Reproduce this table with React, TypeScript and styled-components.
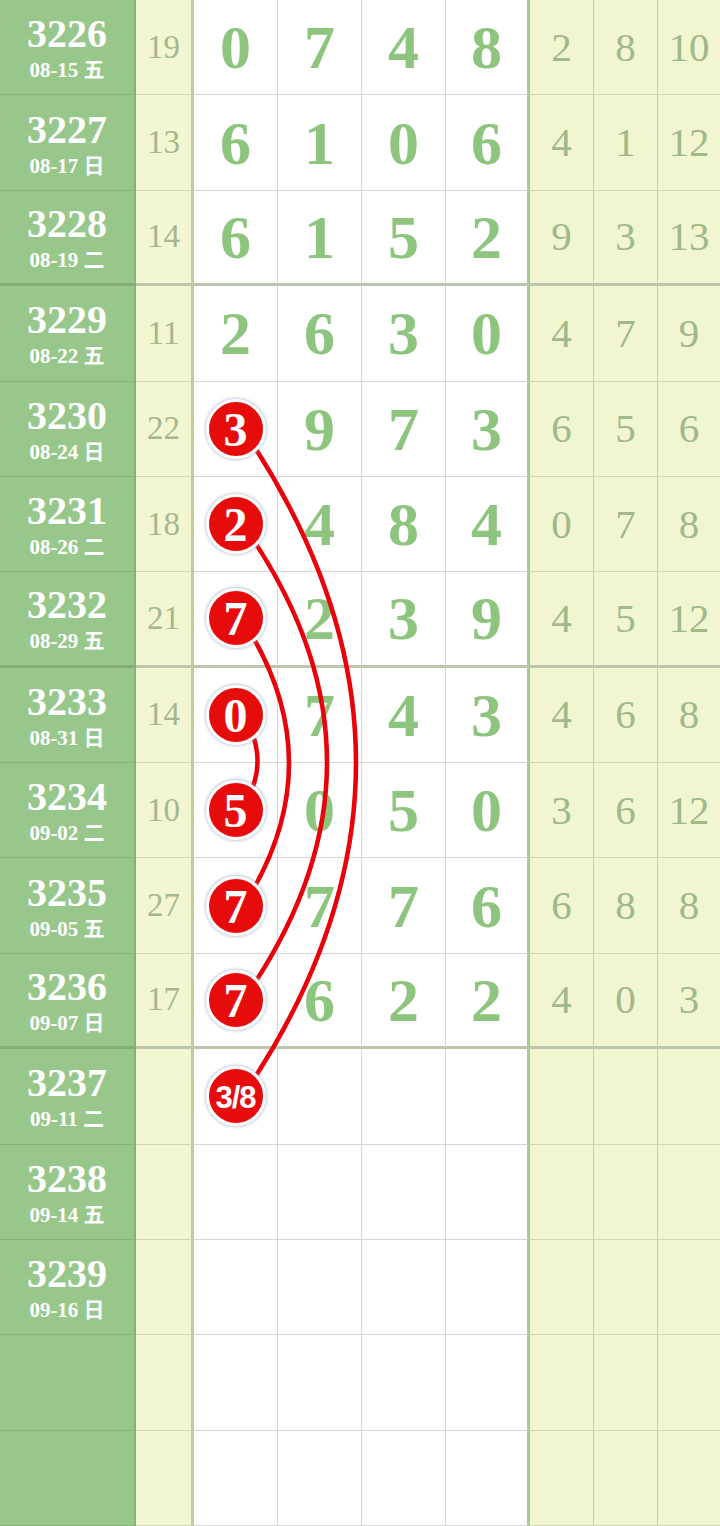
import React from 'react';
import styled, { createGlobalStyle, css } from 'styled-components';

const GlobalStyle = createGlobalStyle`
  html, body {
    margin: 0;
    padding: 0;
    background: #ffffff;
  }
`;

type Kind = 'label' | 'miss' | 'main' | 'mainEnd' | 'side' | 'sideEnd';

interface Draw {
  issue: string;
  date: string;
  miss?: string;
  main?: string[];
  side?: string[];
  ball?: string;
}

const rows: Draw[] = [
  { issue: '3226', date: '08-15 五', miss: '19', main: ['0', '7', '4', '8'], side: ['2', '8', '10'] },
  { issue: '3227', date: '08-17 日', miss: '13', main: ['6', '1', '0', '6'], side: ['4', '1', '12'] },
  { issue: '3228', date: '08-19 二', miss: '14', main: ['6', '1', '5', '2'], side: ['9', '3', '13'] },
  { issue: '3229', date: '08-22 五', miss: '11', main: ['2', '6', '3', '0'], side: ['4', '7', '9'] },
  { issue: '3230', date: '08-24 日', miss: '22', main: ['', '9', '7', '3'], side: ['6', '5', '6'], ball: '3' },
  { issue: '3231', date: '08-26 二', miss: '18', main: ['', '4', '8', '4'], side: ['0', '7', '8'], ball: '2' },
  { issue: '3232', date: '08-29 五', miss: '21', main: ['', '2', '3', '9'], side: ['4', '5', '12'], ball: '7' },
  { issue: '3233', date: '08-31 日', miss: '14', main: ['', '7', '4', '3'], side: ['4', '6', '8'], ball: '0' },
  { issue: '3234', date: '09-02 二', miss: '10', main: ['', '0', '5', '0'], side: ['3', '6', '12'], ball: '5' },
  { issue: '3235', date: '09-05 五', miss: '27', main: ['', '7', '7', '6'], side: ['6', '8', '8'], ball: '7' },
  { issue: '3236', date: '09-07 日', miss: '17', main: ['', '6', '2', '2'], side: ['4', '0', '3'], ball: '7' },
  { issue: '3237', date: '09-11 二', ball: '3/8' },
  { issue: '3238', date: '09-14 五' },
  { issue: '3239', date: '09-16 日' },
  { issue: '', date: '' },
  { issue: '', date: '' },
];

// rows after which a heavier divider is drawn
const dividers = [2, 6, 10];

const Board = styled.div`
  position: relative;
  width: 720px;
  height: 1526px;
  display: grid;
  grid-template-rows: repeat(16, 1fr);
  overflow: hidden;
`;

const Row = styled.div<{ $divider: boolean }>`
  display: grid;
  grid-template-columns: 136px 58px 84px 84px 84px 84px 64px 64px 62px;
  min-height: 0;
  ${({ $divider }) =>
    $divider &&
    css`
      & > div {
        border-bottom: 3px solid #bcc6ad !important;
      }
      & > div:first-child {
        border-bottom-color: #82b173 !important;
      }
    `}
`;

const kindStyles: Record<Kind, ReturnType<typeof css>> = {
  label: css`
    background: #98c78b;
    border-right: 2px solid #84b575;
    border-bottom: 1px solid #85b577;
    flex-direction: column;
    padding-top: 6px;
    color: #ffffff;
  `,
  miss: css`
    background: #f2f7d1;
    border-right: 3px solid #c3caa0;
    border-bottom: 1px solid #d0d8b0;
    color: #a6b78e;
    font-family: 'Liberation Serif', serif;
    font-size: 33px;
  `,
  main: css`
    background: #ffffff;
    border-right: 1px solid #d6d6d6;
    border-bottom: 1px solid #d6d6d6;
    color: #8dc47e;
    font-family: 'Liberation Serif', serif;
    font-weight: 700;
    font-size: 62px;
  `,
  mainEnd: css`
    background: #ffffff;
    border-right: 3px solid #a9c98f;
    border-bottom: 1px solid #d6d6d6;
    color: #8dc47e;
    font-family: 'Liberation Serif', serif;
    font-weight: 700;
    font-size: 62px;
  `,
  side: css`
    background: #f1f6d0;
    border-right: 1px solid #c6cfa6;
    border-bottom: 1px solid #d0d8b0;
    color: #a0b988;
    font-family: 'Liberation Serif', serif;
    font-size: 41px;
  `,
  sideEnd: css`
    background: #f1f6d0;
    border-bottom: 1px solid #d0d8b0;
    color: #a0b988;
    font-family: 'Liberation Serif', serif;
    font-size: 41px;
  `,
};

const Cell = styled.div<{ $kind: Kind }>`
  box-sizing: border-box;
  display: flex;
  align-items: center;
  justify-content: center;
  min-height: 0;
  line-height: 1;
  ${({ $kind }) => kindStyles[$kind]}
`;

const Issue = styled.div`
  font-family: 'Liberation Serif', serif;
  font-weight: 700;
  font-size: 40px;
  line-height: 40px;
  margin-top: -4px;
`;

const DateText = styled.div`
  font-family: 'Liberation Serif', 'Noto Sans CJK SC', serif;
  font-weight: 700;
  font-size: 21px;
  line-height: 24px;
  margin-top: 4px;
`;

const Ball = styled.div<{ $small?: boolean }>`
  position: relative;
  z-index: 2;
  box-sizing: border-box;
  width: 60px;
  height: 60px;
  border-radius: 50%;
  background: #e60c0c;
  border: 3px solid #ffffff;
  box-shadow: 0 0 3px 1px rgba(150, 170, 190, 0.6);
  display: flex;
  align-items: center;
  justify-content: center;
  color: #ffffff;
  font-family: ${({ $small }) => ($small ? "'Liberation Sans', sans-serif" : "'Liberation Serif', serif")};
  font-weight: 700;
  font-size: ${({ $small }) => ($small ? '31px' : '48px')};
  letter-spacing: ${({ $small }) => ($small ? '-1px' : '0')};
  padding-top: 2px;
`;

const Arcs = styled.svg`
  position: absolute;
  left: 0;
  top: 0;
  z-index: 1;
  pointer-events: none;
`;

const Arc = styled.path`
  fill: none;
  stroke: #e8000a;
  stroke-width: 4.5;
  stroke-linecap: round;
`;

export default function App() {
  return (
    <>
      <GlobalStyle />
      <Board>
        {rows.map((r, i) => (
          <Row key={i} $divider={dividers.includes(i)}>
            <Cell $kind="label">
              {r.issue && <Issue>{r.issue}</Issue>}
              {r.date && <DateText>{r.date}</DateText>}
            </Cell>
            <Cell $kind="miss">{r.miss}</Cell>
            {[0, 1, 2, 3].map((c) => (
              <Cell key={c} $kind={c === 3 ? 'mainEnd' : 'main'}>
                {c === 0 && r.ball ? (
                  <Ball $small={r.ball.length > 1}>{r.ball}</Ball>
                ) : (
                  r.main?.[c]
                )}
              </Cell>
            ))}
            {[0, 1, 2].map((c) => (
              <Cell key={c} $kind={c === 2 ? 'sideEnd' : 'side'}>
                {r.side?.[c]}
              </Cell>
            ))}
          </Row>
        ))}
        <Arcs width="720" height="1526" viewBox="0 0 720 1526">
          <Arc d="M250 440 Q462 763 250 1085" />
          <Arc d="M250 535 Q404 762 250 990" />
          <Arc d="M250 632 Q328 763 250 895" />
          <Arc d="M250 728 Q266 763 248 798" />
        </Arcs>
      </Board>
    </>
  );
}
